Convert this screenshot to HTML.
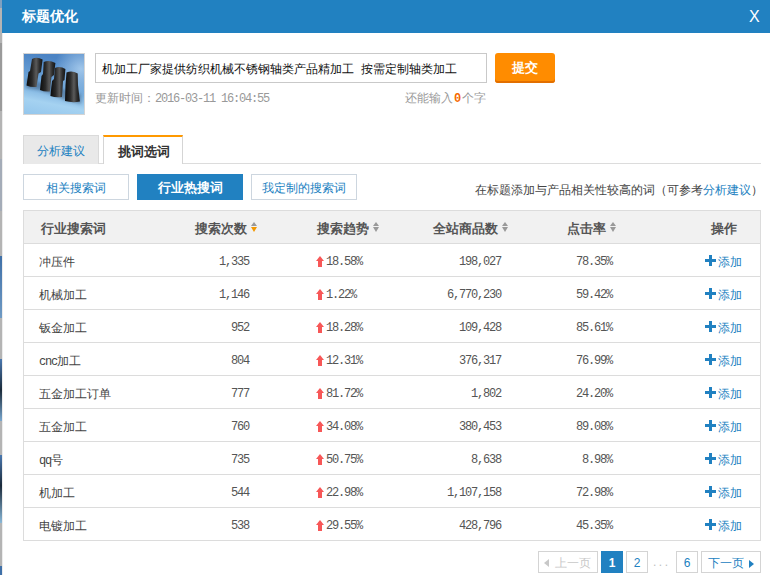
<!DOCTYPE html>
<html><head><meta charset="utf-8">
<style>
*{margin:0;padding:0;box-sizing:border-box}
html,body{width:770px;height:575px;overflow:hidden;background:#fff;font-family:"Liberation Sans",sans-serif;font-size:12px;color:#333}
.abs{position:absolute}
#strip{left:0;top:0;width:2px;height:575px;background:#b4b4b4}
#hdr{left:2px;top:0;width:768px;height:33px;background:#2181c1}
#title{left:22px;top:7px;color:#fff;font-size:14px;font-weight:bold;line-height:18px}
#close{left:749px;top:8px;color:#fff;font-size:16px;line-height:18px}
#pic{left:23px;top:53px;width:62px;height:62px;border:1px solid #d4d4d4;overflow:hidden}
#inp{left:95px;top:53px;width:392px;height:30px;border:1px solid #c9c9c9;padding-left:6px;line-height:31px;font-size:12px;color:#111;white-space:pre}
#btn{left:495px;top:53px;width:60px;height:30px;background:#ff8c00;border-radius:3px;box-shadow:inset 0 -2px 0 #e26f00;color:#fff;font-weight:bold;font-size:13px;line-height:30px;text-align:center}
#upd{left:95px;top:91px;color:#999;line-height:14px}
#remain{left:405px;top:91px;color:#999;line-height:14px}
#remain b{color:#f66a00;font-family:"Liberation Mono",monospace;font-size:12px;letter-spacing:0.5px;padding-left:1px}
#tabline{left:23px;top:163px;width:738px;height:1px;background:#dcdcdc}
.tab{top:135px;height:29px;text-align:center;font-size:13px}
#tab1{left:23px;width:76px;background:#e9e9e9;color:#2181c1;border:1px solid #dadada;border-bottom:none;line-height:30px;font-size:12px}
#tab2{left:103px;width:80px;background:#fff;border-top:2px solid #ff9900;border-left:1px solid #d5d5d5;border-right:1px solid #d5d5d5;font-weight:bold;color:#333;line-height:29px;padding-left:2px}
.sb{top:174px;height:26px;line-height:26px;text-align:center;font-size:12px;border:1px solid #cdd6df;color:#2181c1}
#sb1{left:23px;width:106px}
#sb2{left:137px;width:106px;background:#2181c1;border-color:#2181c1;color:#fff;font-weight:bold;font-size:13px}
#sb3{left:251px;width:106px}
#hint{right:7px;top:183px;color:#444;line-height:14px;font-size:12px}
#hint span{color:#2181c1}

#tbl{left:23px;top:210px;width:738px;height:331px;border:1px solid #dcdcdc}
#thbg{position:absolute;left:0;top:0;width:736px;height:32px;background:#f1f1f1}
.th{position:absolute;top:2px;line-height:32px;font-size:13px;font-weight:bold;color:#555;white-space:nowrap}
.srt{display:inline-block;position:relative;width:7px;height:10px;margin-left:4px;vertical-align:1px}
.srt:before{content:"";position:absolute;left:0;top:0;border-left:3.5px solid transparent;border-right:3.5px solid transparent;border-bottom:4px solid #999}
.srt:after{content:"";position:absolute;left:0;top:5px;border-left:3.5px solid transparent;border-right:3.5px solid transparent;border-top:5px solid #999}
.srt.on:after{border-top-color:#f39800}
.row{position:absolute;left:0;width:736px;height:33px;border-top:1px solid #dcdcdc}
.row span{position:absolute;top:0;line-height:36px;white-space:nowrap}
.k{left:15px;font-size:12px;color:#444}
.n,.tr{font-family:"Liberation Mono",monospace;font-size:12px;letter-spacing:-1.2px;color:#555}
.n2{left:0;width:225px;text-align:right}
.n4{left:0;width:477px;text-align:right}
.n5{left:0;width:588px;text-align:right}
.tr{left:292px}
.ar{display:inline-block;position:relative;width:8px;height:11px;margin-right:2px;vertical-align:-2px}
.ar:before{content:"";position:absolute;left:0;top:0;border-left:4px solid transparent;border-right:4px solid transparent;border-bottom:5px solid #f75757}
.ar:after{content:"";position:absolute;left:2px;top:5px;width:4px;height:6px;background:#f75757}
.add{left:681px;font-size:12px;color:#2181c1}
.pl{display:inline-block;position:relative;width:11px;height:11px;margin-right:2px;vertical-align:0px}
.pl:before{content:"";position:absolute;left:0;top:4px;width:11px;height:3px;background:#2181c1}
.pl:after{content:"";position:absolute;left:4px;top:0;width:3px;height:11px;background:#2181c1}
#pg{left:0;top:0}
.pb{position:absolute;top:551px;height:22px;border:1px solid #d4d4d4;background:#fff;text-align:center;line-height:22px;font-size:12px;color:#2181c1}
.mono{font-family:"Liberation Mono",monospace;font-size:12px;letter-spacing:-1.2px}
.tl{position:absolute;left:5px;top:7px;border-top:4.5px solid transparent;border-bottom:4.5px solid transparent;border-right:5px solid #c8c8c8}
.trr{position:absolute;left:47px;top:8px;border-top:4.5px solid transparent;border-bottom:4.5px solid transparent;border-left:5px solid #2181c1}
.row span.m2{position:static;font-family:"Liberation Mono",monospace;font-size:12px;letter-spacing:-1.2px;line-height:1}
</style></head><body>
<div id="strip" class="abs"><div style="position:absolute;left:0;top:0;width:2px;height:8px;background:#7fa0c0"></div><div style="position:absolute;left:0;top:43px;width:2px;height:68px;background:#9a9a9a"></div><div style="position:absolute;left:0;top:159px;width:2px;height:52px;background:#a4acb8"></div><div style="position:absolute;left:0;top:256px;width:2px;height:62px;background:linear-gradient(#3f70a8,#6f9ac4)"></div><div style="position:absolute;left:0;top:359px;width:2px;height:62px;background:linear-gradient(#4a78b0,#1a2a3a 50%,#7aa8d0)"></div><div style="position:absolute;left:0;top:455px;width:2px;height:68px;background:linear-gradient(#4a78b0,#1a2a3a 45%,#8ab8d8)"></div><div style="position:absolute;left:0;top:566px;width:2px;height:9px;background:#3f70a8"></div></div>
<div id="hdr" class="abs"></div><div class="abs" style="left:2px;top:33px;width:1px;height:542px;background:#ececec"></div>
<div id="title" class="abs">标题优化</div>
<div id="close" class="abs">X</div>
<div id="pic" class="abs"><svg width="60" height="60" viewBox="0 0 60 60" style="display:block">
<defs>
<linearGradient id="bgv" x1="0.2" y1="0" x2="0" y2="1"><stop offset="0" stop-color="#4c84c4"/><stop offset="0.45" stop-color="#6fa6d9"/><stop offset="0.75" stop-color="#a5d2f1"/><stop offset="1" stop-color="#94c6ec"/></linearGradient>
<radialGradient id="bgr" cx="0.95" cy="0.25" r="0.45"><stop offset="0" stop-color="#a9cdee" stop-opacity="0.9"/><stop offset="1" stop-color="#a9cdee" stop-opacity="0"/></radialGradient>
<linearGradient id="cyl" x1="0" y1="0" x2="1" y2="0"><stop offset="0" stop-color="#0c0c0c"/><stop offset="0.35" stop-color="#2a2a2a"/><stop offset="0.6" stop-color="#5a5a5a"/><stop offset="0.8" stop-color="#2e2e2e"/><stop offset="1" stop-color="#141414"/></linearGradient>
<filter id="bl"><feGaussianBlur stdDeviation="1.5"/></filter>
</defs>
<rect width="60" height="60" fill="url(#bgv)"/>
<rect width="60" height="60" fill="url(#bgr)"/>
<path d="M2 34 L14 36 L28 40 L40 46 L57 50 L57 40 L2 25 Z" fill="#1a3050" opacity="0.35" filter="url(#bl)"/>
<path d="M8 5 Q13 2.5 18.6 5.5 L17 18 L14.5 19.5 L12.5 33 Q7 33.5 2.5 31.5 L4.5 18 L6 17 Z" fill="url(#cyl)"/>
<path d="M19.7 8 Q25 5.5 31.4 9 L30 21 L27.5 23 L25.8 37.5 Q20.5 38 16 36 L17.5 22 L19 20 Z" fill="url(#cyl)"/>
<path d="M30.8 14 Q36 11.5 41.4 15 L40.5 26 L39 27 L38 43 Q32 44 26.4 42 L28 27 L30 25 Z" fill="url(#cyl)"/>
<path d="M42.5 18.5 Q48 16 53.7 19.5 L54 31 L55.9 47.5 Q48.5 49 41 47 L41.5 31 Z" fill="url(#cyl)"/>
</svg></div>
<div id="inp" class="abs">机加工厂家提供纺织机械不锈钢轴类产品精加工  按需定制轴类加工</div>
<div id="btn" class="abs">提交</div>
<div id="upd" class="abs">更新时间：<span class="mono">2016-03-11 16:04:55</span></div>
<div id="remain" class="abs">还能输入<b>0</b>个字</div>
<div id="tabline" class="abs"></div>
<div id="tab1" class="abs tab">分析建议</div>
<div id="tab2" class="abs tab">挑词选词</div>
<div id="sb1" class="abs sb">相关搜索词</div>
<div id="sb2" class="abs sb">行业热搜词</div>
<div id="sb3" class="abs sb">我定制的搜索词</div>
<div id="hint" class="abs">在标题添加与产品相关性较高的词（可参考<span>分析建议</span>）</div>
<div id="tbl" class="abs"><div id="thbg"></div>
<div class="th" style="left:17px">行业搜索词</div>
<div class="th" style="left:171px">搜索次数<i class="srt on"></i></div>
<div class="th" style="left:293px">搜索趋势<i class="srt"></i></div>
<div class="th" style="left:409px">全站商品数<i class="srt"></i></div>
<div class="th" style="left:543px">点击率<i class="srt"></i></div>
<div class="th" style="left:687px">操作</div>
<div class="row" style="top:32px">
<span class="k">冲压件</span>
<span class="n n2">1,335</span>
<span class="tr"><i class="ar"></i>18.58%</span>
<span class="n n4">198,027</span>
<span class="n n5">78.35%</span>
<span class="add"><i class="pl"></i>添加</span>
</div>
<div class="row" style="top:65px">
<span class="k">机械加工</span>
<span class="n n2">1,146</span>
<span class="tr"><i class="ar"></i>1.22%</span>
<span class="n n4">6,770,230</span>
<span class="n n5">59.42%</span>
<span class="add"><i class="pl"></i>添加</span>
</div>
<div class="row" style="top:98px">
<span class="k">钣金加工</span>
<span class="n n2">952</span>
<span class="tr"><i class="ar"></i>18.28%</span>
<span class="n n4">109,428</span>
<span class="n n5">85.61%</span>
<span class="add"><i class="pl"></i>添加</span>
</div>
<div class="row" style="top:131px">
<span class="k"><span class="m2">cnc</span>加工</span>
<span class="n n2">804</span>
<span class="tr"><i class="ar"></i>12.31%</span>
<span class="n n4">376,317</span>
<span class="n n5">76.99%</span>
<span class="add"><i class="pl"></i>添加</span>
</div>
<div class="row" style="top:164px">
<span class="k">五金加工订单</span>
<span class="n n2">777</span>
<span class="tr"><i class="ar"></i>81.72%</span>
<span class="n n4">1,802</span>
<span class="n n5">24.20%</span>
<span class="add"><i class="pl"></i>添加</span>
</div>
<div class="row" style="top:197px">
<span class="k">五金加工</span>
<span class="n n2">760</span>
<span class="tr"><i class="ar"></i>34.08%</span>
<span class="n n4">380,453</span>
<span class="n n5">89.08%</span>
<span class="add"><i class="pl"></i>添加</span>
</div>
<div class="row" style="top:230px">
<span class="k"><span class="m2">qq</span>号</span>
<span class="n n2">735</span>
<span class="tr"><i class="ar"></i>50.75%</span>
<span class="n n4">8,638</span>
<span class="n n5">8.98%</span>
<span class="add"><i class="pl"></i>添加</span>
</div>
<div class="row" style="top:263px">
<span class="k">机加工</span>
<span class="n n2">544</span>
<span class="tr"><i class="ar"></i>22.98%</span>
<span class="n n4">1,107,158</span>
<span class="n n5">72.98%</span>
<span class="add"><i class="pl"></i>添加</span>
</div>
<div class="row" style="top:296px">
<span class="k">电镀加工</span>
<span class="n n2">538</span>
<span class="tr"><i class="ar"></i>29.55%</span>
<span class="n n4">428,796</span>
<span class="n n5">45.35%</span>
<span class="add"><i class="pl"></i>添加</span>
</div>
</div>
<div class="pb" style="left:538px;width:60px;color:#c8c8c8"><i class="tl"></i><span style="position:absolute;left:16px;top:0">上一页</span></div>
<div class="pb" style="left:601px;width:22px;background:#2181c1;border-color:#2181c1;color:#fff;font-weight:bold;font-size:12px;line-height:23px">1</div>
<div class="pb" style="left:626px;width:22px;font-size:12px;line-height:23px">2</div>
<div class="abs" style="left:653px;top:551px;line-height:22px;color:#c0c0c0;font-size:12px;letter-spacing:2.5px">...</div>
<div class="pb" style="left:676px;width:22px;font-size:12px;line-height:23px">6</div>
<div class="pb" style="left:701px;width:60px"><span style="position:absolute;left:6px;top:0">下一页</span><i class="trr"></i></div>
</body></html>
